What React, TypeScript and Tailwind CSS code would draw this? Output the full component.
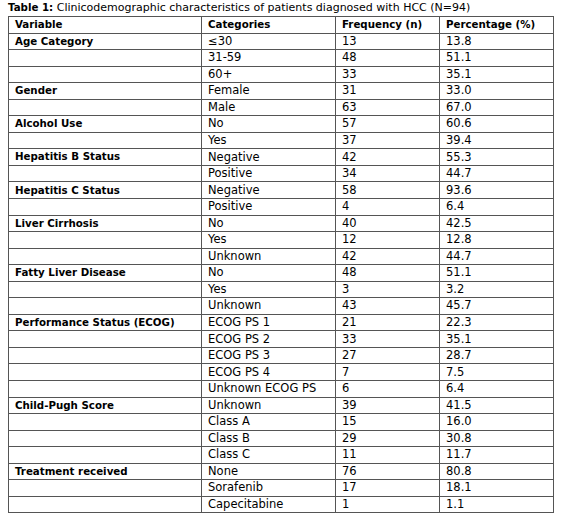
const rows: [string, string, string, string][] = [
  ["Age Category", "≤30", "13", "13.8"],
  ["", "31-59", "48", "51.1"],
  ["", "60+", "33", "35.1"],
  ["Gender", "Female", "31", "33.0"],
  ["", "Male", "63", "67.0"],
  ["Alcohol Use", "No", "57", "60.6"],
  ["", "Yes", "37", "39.4"],
  ["Hepatitis B Status", "Negative", "42", "55.3"],
  ["", "Positive", "34", "44.7"],
  ["Hepatitis C Status", "Negative", "58", "93.6"],
  ["", "Positive", "4", "6.4"],
  ["Liver Cirrhosis", "No", "40", "42.5"],
  ["", "Yes", "12", "12.8"],
  ["", "Unknown", "42", "44.7"],
  ["Fatty Liver Disease", "No", "48", "51.1"],
  ["", "Yes", "3", "3.2"],
  ["", "Unknown", "43", "45.7"],
  ["Performance Status (ECOG)", "ECOG PS 1", "21", "22.3"],
  ["", "ECOG PS 2", "33", "35.1"],
  ["", "ECOG PS 3", "27", "28.7"],
  ["", "ECOG PS 4", "7", "7.5"],
  ["", "Unknown ECOG PS", "6", "6.4"],
  ["Child-Pugh Score", "Unknown", "39", "41.5"],
  ["", "Class A", "15", "16.0"],
  ["", "Class B", "29", "30.8"],
  ["", "Class C", "11", "11.7"],
  ["Treatment received", "None", "76", "80.8"],
  ["", "Sorafenib", "17", "18.1"],
  ["", "Capecitabine", "1", "1.1"],
]

const cell = "flex items-center border-r border-[#555] px-[6px] whitespace-nowrap overflow-hidden"
const bold = "font-bold text-[10.25px]"

function Row({ cells, head }: { cells: string[]; head?: boolean }) {
  return (
    <div className="grid grid-cols-[193px_134px_104px_114px] h-[16.55px] border-b border-[#555]">
      {cells.map((c, i) => (
        <div key={i} className={cell + (head || i === 0 ? " " + bold : " text-[11.5px]")}>
          {c}
        </div>
      ))}
    </div>
  )
}

export default function App() {
  return (
    <div className="min-h-screen bg-white px-[8px] text-[11px] text-black" style={{ fontFamily: '"DejaVu Sans", sans-serif' }}>
      <p className="h-[16px] leading-[14px]">
        <span className={bold}>Table 1:</span> Clinicodemographic characteristics of patients diagnosed with HCC (N=94)
      </p>
      <div className="w-[546px] border-l border-t border-[#555]">
        <Row head cells={["Variable", "Categories", "Frequency (n)", "Percentage (%)"]} />
        {rows.map((r, i) => (
          <Row key={i} cells={r} />
        ))}
      </div>
    </div>
  )
}
